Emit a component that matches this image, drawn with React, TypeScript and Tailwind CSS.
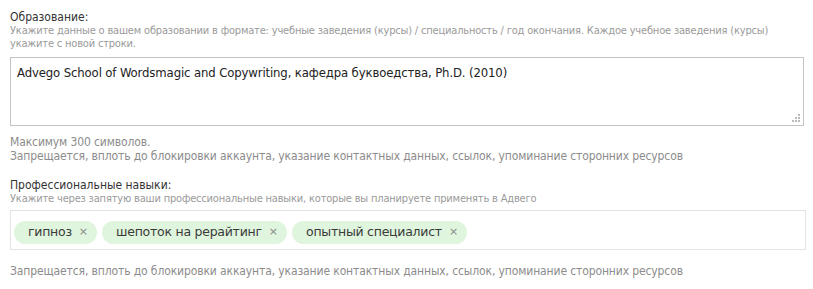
const tags = ['гипноз', 'шепоток на рерайтинг', 'опытный специалист'];

const narrow = "font-['DejaVu_Sans_Condensed','DejaVu_Sans',sans-serif] font-stretch-condensed";

function Hint({ children }: { children: React.ReactNode }) {
  return (
    <div className={`${narrow} text-[11px] leading-[13px] tracking-[-0.18px] text-[#9a9a9a]`}>{children}</div>
  );
}

export default function App() {
  return (
    <div className="w-[813px] h-[289px] bg-white px-[10px] pt-[10px] font-['DejaVu_Sans',sans-serif]">
      {/* Education */}
      <div className={`${narrow} text-[12px] leading-[14px] text-[#333]`}>Образование:</div>
      <Hint>
        Укажите данные о вашем образовании в формате: учебные заведения (курсы) / специальность / год окончания. Каждое учебное заведения (курсы) укажите с новой строки.
      </Hint>
      <div className={`${narrow} relative mt-[7px] w-[794px] h-[69px] border border-[#c4c4c4] px-[6px] pt-[7px] text-[13px] leading-[16px] tracking-[-0.13px] text-[#222]`}>
        Advego School of Wordsmagic and Copywriting, кафедра буквоедства, Ph.D. (2010)
        <svg className="absolute right-[3px] bottom-[3px]" width="8" height="8" viewBox="0 0 8 8">
          <rect x="6" y="0" width="2" height="2" fill="#bbb" />
          <rect x="3" y="3" width="2" height="2" fill="#bbb" />
          <rect x="6" y="3" width="2" height="2" fill="#bbb" />
          <rect x="0" y="6" width="2" height="2" fill="#bbb" />
          <rect x="3" y="6" width="2" height="2" fill="#bbb" />
          <rect x="6" y="6" width="2" height="2" fill="#bbb" />
        </svg>
      </div>
      <div className={`${narrow} mt-[9px] text-[12px] leading-[14px] tracking-[-0.12px] text-[#8c8c8c]`}>
        <div>Максимум 300 символов.</div>
        <div>Запрещается, вплоть до блокировки аккаунта, указание контактных данных, ссылок, упоминание сторонних ресурсов</div>
      </div>

      {/* Skills */}
      <div className={`${narrow} mt-[15px] text-[12px] leading-[14px] text-[#333]`}>Профессиональные навыки:</div>
      <Hint>Укажите через запятую ваши профессиональные навыки, которые вы планируете применять в Адвего</Hint>
      <div className="mt-[5px] w-[796px] h-[40px] border border-[#e3e3e3] flex items-start gap-[5px] pl-[3px] pt-[10px]">
        {tags.map((t) => (
          <span
            key={t}
            className="flex items-center h-[23px] rounded-full bg-[#e0f5dd] pl-[14px] pr-[9px] text-[12.5px] tracking-[-0.25px] text-[#3a3a3a]"
          >
            {t}
            <span className="ml-[7px] text-[11px] tracking-normal text-[#888]">×</span>
          </span>
        ))}
      </div>
      <div className={`${narrow} mt-[14px] text-[12px] leading-[14px] tracking-[-0.12px] text-[#8c8c8c]`}>
        Запрещается, вплоть до блокировки аккаунта, указание контактных данных, ссылок, упоминание сторонних ресурсов
      </div>
    </div>
  );
}
